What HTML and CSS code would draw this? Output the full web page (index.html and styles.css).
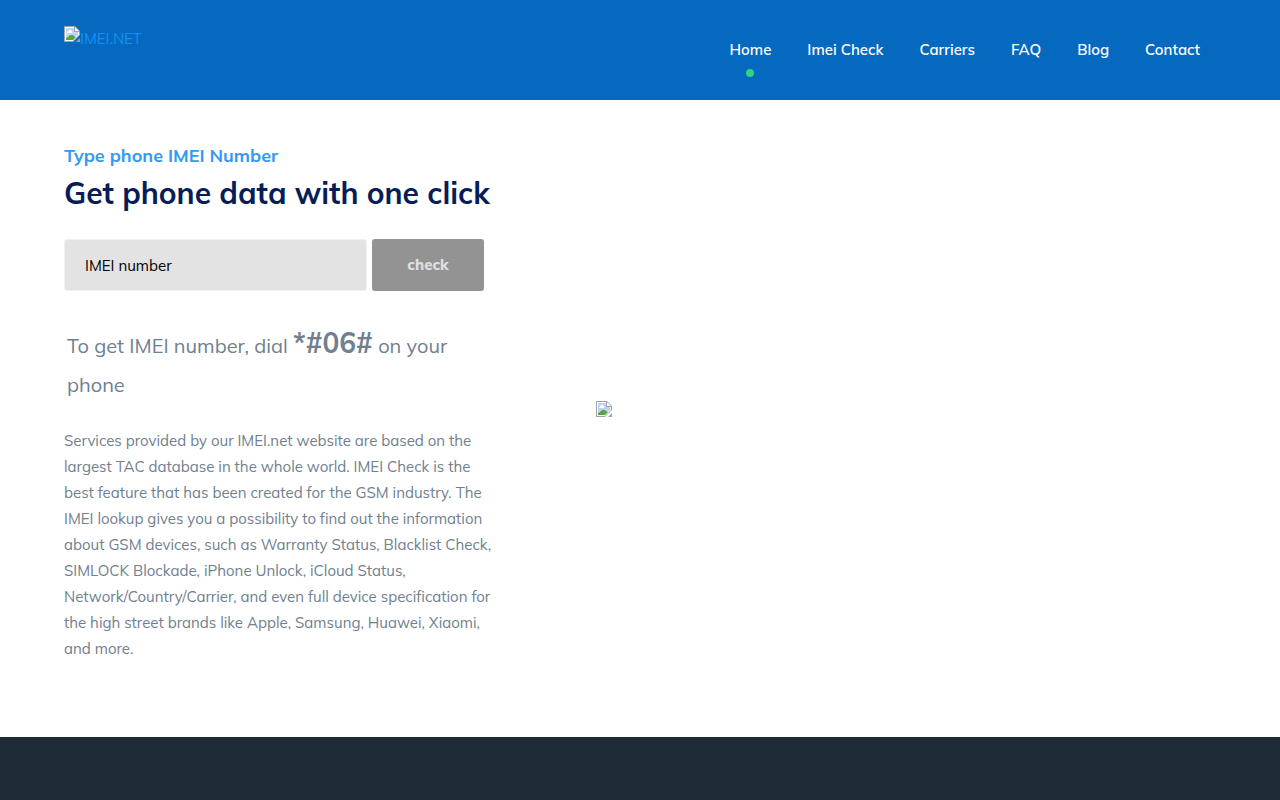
FILE: index.html
```html
<!DOCTYPE html>
<html lang="en">
<head>
    <meta charset="UTF-8">
    <meta name="viewport" content="width=device-width, initial-scale=1.0">
    <title>IMEI.NET</title>
    <link rel="stylesheet" href="styles.css">
</head>
<body>
    <svg class="sprite" aria-hidden="true">
        <symbol id="picture" viewBox="0 0 16 16">
            <path fill="#a2a2a2" d="M0 0h11l5 5v4l-7 7H0z"/>
            <path fill="#fff" d="M1 1h9v5h5v3l-6 6H1z"/>
            <path fill="#c1d3f8" d="M2 2h8v4h4v3l-5 5H2z"/>
            <path fill="#fff" d="M3 6h1V5h1V4h2v1h1v2H3z"/>
            <path fill="#53a93f" d="M2 14v-2l2-1 2-2h3l2 2 1 0-3 3z"/>
            <path fill="#fff" d="M11 1l4 4h-4z"/>
            <path fill="#a2a2a2" d="M16 12v4h-4z"/>
        </symbol>
    </svg>

    <header class="header">
        <a class="logo" href="#">
            <svg class="picture" aria-hidden="true"><use href="#picture"/></svg>IMEI.NET
        </a>
        <nav class="menu">
            <a class="active" href="#">Home</a>
            <a href="#">Imei Check</a>
            <a href="#">Carriers</a>
            <a href="#">FAQ</a>
            <a href="#">Blog</a>
            <a href="#">Contact</a>
        </nav>
    </header>

    <main class="hero">
        <div class="hero-text">
            <p class="subtitle">Type phone IMEI Number</p>
            <h1>Get phone data with one click</h1>
            <form class="imei-form">
                <input type="text" aria-label="IMEI number" placeholder="IMEI number">
                <button type="submit" disabled>check</button>
            </form>
            <p class="hint">To get IMEI number, dial <strong>*#06#</strong> on your phone</p>
            <p class="description">Services provided by our IMEI.net website are based on the largest TAC database in the whole world. IMEI Check is the best feature that has been created for the GSM industry. The IMEI lookup gives you a possibility to find out the information about GSM devices, such as Warranty Status, Blacklist Check, SIMLOCK Blockade, iPhone Unlock, iCloud Status, Network/Country/Carrier, and even full device specification for the high street brands like Apple, Samsung, Huawei, Xiaomi, and more.</p>
        </div>
        <div class="hero-image">
            <svg class="picture" aria-hidden="true"><use href="#picture"/></svg>
        </div>
    </main>

    <footer class="footer"></footer>
</body>
</html>
```
FILE: styles.css
```css
* {
    box-sizing: border-box;
}
body {
    margin: 0;
    min-height: 100vh;
    display: flex;
    flex-direction: column;
    font-family: Muli, Mulish, Lato, sans-serif;
    font-size: 15px;
    font-variant-ligatures: none;
    line-height: 26px;
    color: #708090;
    background: #fff;
}
h1, p {
    margin: 0;
}
a {
    text-decoration: none;
}
.sprite {
    display: none;
}
.picture {
    display: block;
    width: 16px;
    height: 16px;
}
.header {
    display: flex;
    justify-content: space-between;
    align-items: flex-start;
    min-height: 100px;
    padding: 26px 5%;
    background: #0469bf;
}
.logo {
    display: flex;
    color: #1491f3;
}
.menu {
    display: flex;
    gap: 36px;
    padding: 11px 16px 0 0;
}
.menu a {
    position: relative;
    color: #fff;
    font-weight: 600;
}
.menu .active::after {
    content: "";
    position: absolute;
    top: 32px;
    left: calc(50% - 4px);
    width: 8px;
    height: 8px;
    border-radius: 50%;
    background: #2fd57b;
}
.hero {
    display: grid;
    grid-template-columns: minmax(0, 432px) 1fr;
    column-gap: 100px;
    padding: 43px 5% 75px;
}
.subtitle {
    font-size: 18px;
    font-weight: 700;
    color: #339af0;
}
h1 {
    margin-top: 4px;
    font-size: 30px;
    line-height: 40px;
    font-weight: 700;
    color: #061d57;
}
.imei-form {
    display: flex;
    align-items: center;
    gap: 5px;
    margin: 26px 12px 0 0;
}
.imei-form input {
    flex: 1;
    min-width: 0;
    height: 52px;
    padding: 0 20px;
    border: 1px solid #f1f1f1;
    border-radius: 3px;
    background: #e3e3e3;
    font: inherit;
    color: #000;
}
.imei-form input::placeholder {
    color: #000;
}
.imei-form button {
    width: 112px;
    height: 52px;
    border: none;
    border-radius: 3px;
    background: #939393;
    font: inherit;
    font-weight: 800;
    color: #e0e0e0;
}
.hint {
    margin-top: 32px;
    padding: 0 3px;
    font-size: 20px;
    line-height: 39px;
}
.hint strong {
    font-size: 28px;
}
.description {
    margin-top: 24px;
}
.hero-image {
    align-self: center;
    padding-top: 12px;
}
.footer {
    flex: 1;
    min-height: 60px;
    background: #1e2b37;
}
```
